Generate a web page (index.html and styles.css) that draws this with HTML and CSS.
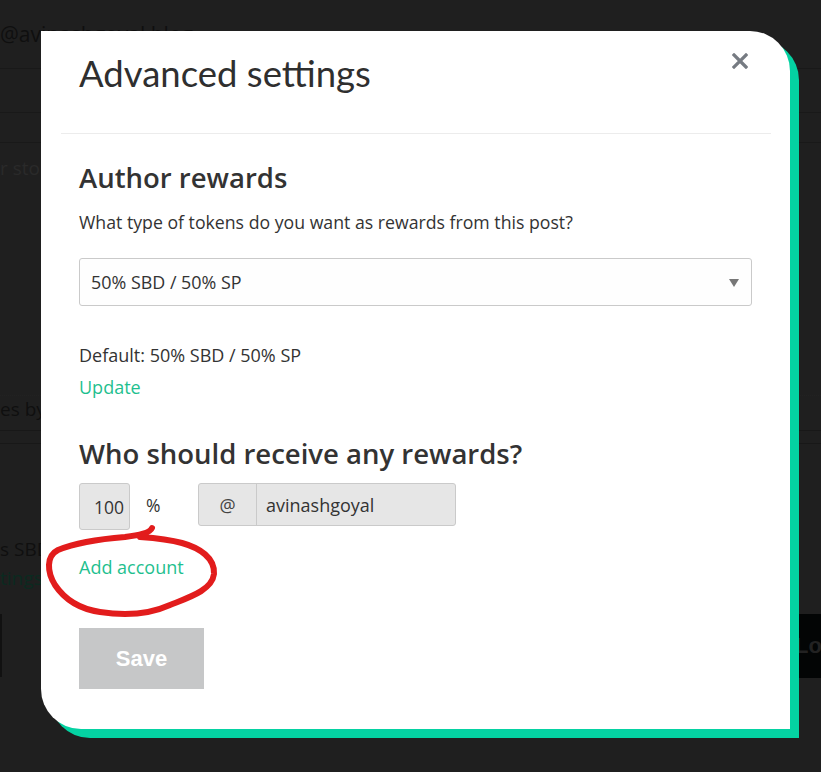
FILE: index.html
```html
<!DOCTYPE html>
<html lang="en">
  <head>
    <meta charset="UTF-8" />
    <meta name="viewport" content="width=device-width, initial-scale=1.0" />
    <title>Advanced settings</title>
    <link rel="stylesheet" href="styles.css">
  </head>

  <body>
    <!-- Page behind the overlay -->
    <div class="page">
      <div class="page-head">@avinashgoyal.blog</div>
      <div class="page-row row-title"></div>
      <div class="page-row row-tags"></div>
      <div class="page-editor">r story</div>
      <div class="page-row row-dots"></div>
      <div class="page-note">es by c</div>
      <div class="page-row row-thin"></div>
      <div class="page-rewards">
        <p>s SBD</p>
        <p class="page-link">tings</p>
      </div>
      <div class="page-actions">
        <div class="page-box"></div>
        <button class="page-button">Loa</button>
      </div>
    </div>

    <!-- Modal -->
    <div class="modal">
      <div class="modal-header">
        <h2 class="modal-title">Advanced settings</h2>
        <button class="close-button" aria-label="Close">
          <svg width="16" height="16" viewBox="0 0 16 16">
            <path d="M2 2 L14 14 M14 2 L2 14" stroke="#767b82" stroke-width="3.2" stroke-linecap="square" />
          </svg>
        </button>
      </div>
      <hr class="modal-rule" />

      <div class="modal-body">
        <h3 class="section-title">Author rewards</h3>
        <p class="section-text">What type of tokens do you want as rewards from this post?</p>

        <div class="select-wrap">
          <select class="reward-select">
            <option>50% SBD / 50% SP</option>
          </select>
        </div>

        <p class="default-text">Default: 50% SBD / 50% SP</p>
        <a class="link" href="#">Update</a>

        <h3 class="section-title receive-title">Who should receive any rewards?</h3>

        <div class="beneficiary">
          <div class="percent">
            <input class="percent-input" type="text" value="100" disabled />
            <span class="percent-sign">%</span>
          </div>
          <div class="account">
            <span class="account-at">@</span>
            <input class="account-input" type="text" value="avinashgoyal" disabled />
          </div>
        </div>

        <a class="link add-account" href="#">Add account</a>

        <button class="save-button" disabled>Save</button>
      </div>
    </div>

    <!-- Hand drawn mark -->
    <svg class="scribble" width="821" height="772" viewBox="0 0 821 772">
      <path
        d="M152 528 C 150 533, 140 535, 125 537 C 100 539, 75 543, 58 550 C 46 556, 47 572, 55 585 C 65 600, 80 609, 100 612 C 125 616, 150 614, 170 605 C 190 597, 212 590, 214 574 C 215 558, 200 548, 182 543 C 168 539, 155 538, 140 537"
        fill="none"
        stroke="#e21c1c"
        stroke-width="6"
        stroke-linecap="round"
        stroke-linejoin="round"
      />
    </svg>
  </body>
</html>
```

FILE: styles.css
```css
* {
  margin: 0;
  padding: 0;
  box-sizing: border-box;
}

body {
  font-family: "Open Sans", Lato, sans-serif;
  background: #1f1f1f;
  color: #333;
  width: 821px;
  height: 772px;
  overflow: hidden;
  position: relative;
}

/* Page behind the overlay */
.page {
  display: flex;
  flex-direction: column;
  color: #0f0f0f;
}

.page-head {
  height: 69px;
  padding-top: 20px;
  font-size: 21px;
  border-bottom: 1px solid #191919;
}

.page-row {
  border-bottom: 1px solid #191919;
}

.row-title {
  height: 44px;
}

.row-tags {
  height: 30px;
}

.page-editor {
  height: 252px;
  padding-top: 12px;
  font-size: 19px;
  color: #2a2a2a;
}

.row-dots {
  border-bottom: 1px dotted #222;
}

.page-note {
  height: 35px;
  padding-top: 0;
  font-size: 19px;
  border-bottom: 1px solid #181818;
}

.row-thin {
  height: 13px;
  border-bottom: 1px solid #181818;
}

.page-rewards {
  height: 173px;
  padding-top: 91px;
  font-size: 19px;
  line-height: 29px;
}

.page-link {
  color: #0b2a20;
}

.page-actions {
  display: flex;
  justify-content: space-between;
  margin-top: -3px;
}

.page-box {
  width: 30px;
  height: 63px;
  border-left: 2px solid #111;
}

.page-button {
  width: 150px;
  height: 64px;
  border: none;
  background: #030505;
  color: #222;
  font-family: "Liberation Sans", Arial, sans-serif;
  font-weight: bold;
  font-size: 22px;
  text-align: left;
  padding-left: 124px;
  white-space: nowrap;
  overflow: hidden;
}

/* Modal */
.modal {
  position: absolute;
  left: 41px;
  top: 31px;
  width: 749px;
  height: 698px;
  background: #fff;
  border-radius: 0 40px 0 40px;
  box-shadow: 9px 9px 0 #04d2a2;
}

.modal-header {
  position: relative;
  height: 102px;
  padding: 21px 38px 0;
}

.modal-title {
  font-family: Lato, "Open Sans", sans-serif;
  font-size: 36.5px;
  font-weight: 400;
  line-height: 43px;
  color: #2f2f2f;
}

.close-button {
  position: absolute;
  top: 22px;
  right: 42px;
  border: none;
  background: none;
  display: flex;
  cursor: pointer;
}

.modal-rule {
  border: none;
  border-top: 1px solid #ececec;
  margin: 0 19px 0 20px;
}

.modal-body {
  display: flex;
  flex-direction: column;
  align-items: flex-start;
  padding: 0 38px;
}

.section-title {
  font-size: 27.5px;
  font-weight: 600;
  line-height: 31px;
  margin-top: 28px;
  color: #333;
}

.section-text {
  font-size: 17.7px;
  line-height: 24px;
  margin-top: 17px;
}

.select-wrap {
  position: relative;
  width: 100%;
  margin-top: 24px;
}

.select-wrap::after {
  content: "";
  position: absolute;
  right: 13px;
  top: 21px;
  border-left: 5px solid transparent;
  border-right: 5px solid transparent;
  border-top: 8px solid #777;
}

.reward-select {
  appearance: none;
  -webkit-appearance: none;
  width: 100%;
  height: 48px;
  padding: 0 11px;
  border: 1px solid #cacaca;
  border-radius: 3px;
  background: #fefefe;
  font-family: "Open Sans", Lato, sans-serif;
  font-size: 17.9px;
  color: #333;
}

.default-text {
  font-size: 18px;
  line-height: 32px;
  margin-top: 33px;
}

.link {
  font-size: 18px;
  line-height: 32px;
  color: #1fbf8f;
  text-decoration: none;
}

.receive-title {
  margin-top: 35px;
}

.beneficiary {
  display: flex;
  align-items: flex-start;
  margin-top: 14px;
}

.percent {
  display: flex;
  align-items: center;
  width: 119px;
}

.percent-input {
  width: 51px;
  height: 47px;
  padding-right: 5px;
  text-align: right;
  border: 1px solid #cacaca;
  border-radius: 3px;
  background: #e6e6e6;
  font-family: "Open Sans", Lato, sans-serif;
  font-size: 17.5px;
  color: #333;
}

.percent-sign {
  font-size: 17.5px;
  margin-left: 16px;
  margin-top: -4px;
}

.account {
  display: flex;
  height: 43px;
  border: 1px solid #cacaca;
  border-radius: 3px;
  background: #e6e6e6;
}

.account-at {
  width: 58px;
  display: flex;
  align-items: center;
  justify-content: center;
  border-right: 1px solid #cacaca;
  font-size: 18px;
  color: #444;
}

.account-input {
  width: 198px;
  border: none;
  background: transparent;
  padding-left: 9px;
  font-family: "Open Sans", Lato, sans-serif;
  font-size: 18px;
  color: #333;
}

.add-account {
  line-height: 24px;
  margin-top: 25px;
}

.save-button {
  width: 125px;
  height: 61px;
  margin-top: 49px;
  border: none;
  background: #c6c7c8;
  color: #fff;
  font-family: "Liberation Sans", Arial, sans-serif;
  font-weight: bold;
  font-size: 22px;
}

/* Hand drawn mark over the page */
.scribble {
  position: absolute;
  left: 0;
  top: 0;
  pointer-events: none;
}
```
